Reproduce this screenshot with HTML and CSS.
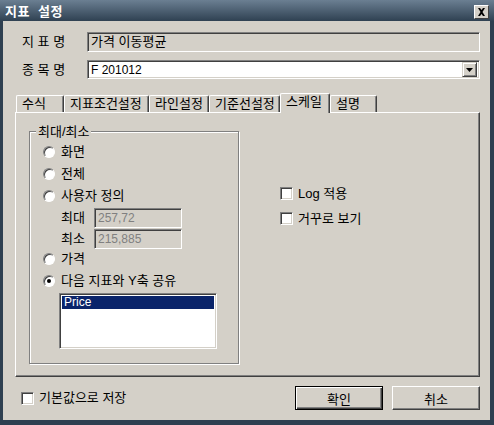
FILE: index.html
```html
<!DOCTYPE html>
<html lang="ko">
<head>
    <meta charset="UTF-8">
    <title>지표 설정</title>
    <link rel="stylesheet" href="styles.css">
</head>
<body>
    <div class="window">
        <div class="titlebar">
            <span class="title">지표 설정</span>
            <span class="close-btn">
                <svg width="9" height="8" viewBox="0 0 9 8"><path d="M1 0h2l1.5 2 1.5-2h2L5.5 4 8 8H6L4.5 6 3 8H1l2.5-4z" fill="#000"/></svg>
            </span>
        </div>
        <div class="client">
            <div class="field-row">
                <label>지 표 명</label>
                <div class="edit disabled">가격 이동평균</div>
            </div>
            <div class="field-row second">
                <label>종 목 명</label>
                <div class="edit combo">
                    <span class="latin">F 201012</span>
                    <span class="drop-btn">
                        <svg width="7" height="4" viewBox="0 0 7 4"><path d="M0 0h7L3.5 4z" fill="#000"/></svg>
                    </span>
                </div>
            </div>

            <div class="tabs">
                <div class="tab" style="width:48px">수식</div>
                <div class="tab" style="width:85px">지표조건설정</div>
                <div class="tab" style="width:60px">라인설정</div>
                <div class="tab" style="width:71px">기준선설정</div>
                <div class="tab active" style="width:50px">스케일</div>
                <div class="tab" style="width:47px">설명</div>
            </div>
            <div class="panel">
                <div class="group">
                    <div class="group-title">최대/최소</div>
                    <div class="radio-row"><span class="radio"></span>화면</div>
                    <div class="radio-row"><span class="radio"></span>전체</div>
                    <div class="radio-row"><span class="radio"></span>사용자 정의</div>
                    <div class="range-row"><span class="range-label">최대</span><div class="edit small disabled latin">257,72</div></div>
                    <div class="range-row"><span class="range-label">최소</span><div class="edit small disabled latin">215,885</div></div>
                    <div class="radio-row gap"><span class="radio"></span>가격</div>
                    <div class="radio-row"><span class="radio checked"></span>다음 지표와 Y축 공유</div>
                    <div class="listbox">
                        <div class="list-item selected latin">Price</div>
                    </div>
                </div>
                <div class="options">
                    <div class="check-row"><span class="checkbox"></span>Log 적용</div>
                    <div class="check-row"><span class="checkbox"></span>거꾸로 보기</div>
                </div>
            </div>

            <div class="footer">
                <div class="check-row"><span class="checkbox"></span>기본값으로 저장</div>
                <div class="buttons">
                    <button class="btn default">확인</button>
                    <button class="btn">취소</button>
                </div>
            </div>
        </div>
    </div>
</body>
</html>
```

FILE: styles.css
```css
body {
    margin: 0;
    font-family: "Liberation Sans", "Noto Sans CJK KR", sans-serif;
    font-size: 13px;
    color: #000;
}

.latin {
    font-size: 12px;
}

.window {
    width: 494px;
    height: 425px;
    box-sizing: border-box;
    background: #2e3f50;
    display: flex;
    flex-direction: column;
}

.titlebar {
    height: 21px;
    display: flex;
    align-items: center;
    justify-content: space-between;
    padding: 0 5px 0 5px;
    background: linear-gradient(#6b7f92, #2f4152);
}

.title {
    color: #fff;
    font-weight: bold;
    font-size: 13px;
    letter-spacing: 0.5px;
    word-spacing: 4px;
}

.close-btn {
    width: 15px;
    height: 14px;
    box-sizing: border-box;
    margin-top: 3px;
    background: #d4d0c8;
    border: 1px solid;
    border-color: #fff #404040 #404040 #fff;
    display: flex;
    align-items: center;
    justify-content: center;
}

.client {
    flex: 1;
    margin: 0 4px 5px 3px;
    background: #d4d0c8;
    padding: 11px 10px 0 12px;
}

.field-row {
    display: flex;
    align-items: center;
    padding-left: 7px;
    height: 20px;
}

.field-row.second {
    margin-top: 8px;
    height: 19px;
}

.field-row label {
    width: 65px;
    line-height: 14px;
}

.edit {
    box-sizing: border-box;
    height: 100%;
    flex: 1;
    background: #fff;
    border: 1px solid;
    border-color: #808080 #fff #fff #808080;
    box-shadow: inset 1px 1px 0 #404040, inset -1px -1px 0 #d4d0c8;
    padding: 0 3px;
    display: flex;
    align-items: center;
    line-height: 14px;
}

.edit.disabled {
    background: #d4d0c8;
}

.combo {
    padding-right: 2px;
    justify-content: space-between;
}

.drop-btn {
    width: 15px;
    height: 15px;
    box-sizing: border-box;
    background: #d4d0c8;
    border: 1px solid;
    border-color: #d4d0c8 #404040 #404040 #d4d0c8;
    box-shadow: inset 1px 1px 0 #fff, inset -1px -1px 0 #808080;
    display: flex;
    align-items: center;
    justify-content: center;
}

.tabs {
    margin-top: 14px;
    height: 19px;
    display: flex;
    align-items: flex-end;
    padding-left: 1px;
}

.tab {
    box-sizing: border-box;
    height: 17px;
    padding-left: 5px;
    line-height: 15px;
    border-top: 1px solid #fff;
    border-left: 1px solid #fff;
    border-right: 1px solid #404040;
    box-shadow: inset -1px 0 0 #808080;
    border-radius: 2px 2px 0 0;
    white-space: nowrap;
}

.tab.active {
    height: 20px;
    margin-bottom: -1px;
    position: relative;
    z-index: 1;
    background: #d4d0c8;
    line-height: 16px;
}

.panel {
    height: 265px;
    box-sizing: border-box;
    border: 1px solid;
    border-color: #fff #404040 #404040 #fff;
    box-shadow: inset -1px -1px 0 #808080;
    display: flex;
    align-items: flex-start;
}

.group {
    width: 210px;
    height: 233px;
    box-sizing: border-box;
    margin: 18px 0 0 13px;
    border: 1px solid #808080;
    box-shadow: inset 1px 1px 0 #fff, 1px 1px 0 #fff;
    padding-left: 13px;
}

.group-title {
    width: fit-content;
    margin: -8px 0 0 -7px;
    padding: 0 2px;
    background: #d4d0c8;
    line-height: 15px;
}

.radio-row {
    height: 22px;
    display: flex;
    align-items: center;
    line-height: 14px;
}

.group-title + .radio-row {
    margin-top: 2px;
}

.radio {
    width: 12px;
    height: 12px;
    box-sizing: border-box;
    border-radius: 50%;
    border: 1px solid;
    border-color: #808080 #fff #fff #808080;
    box-shadow: inset 1px 1px 0 #404040;
    background: #fff;
    margin-right: 6px;
    display: flex;
    align-items: center;
    justify-content: center;
}

.radio.checked::after {
    content: "";
    width: 4px;
    height: 4px;
    border-radius: 50%;
    background: #000;
}

.range-row {
    display: flex;
    align-items: center;
    height: 20px;
    margin-top: 1px;
    padding-left: 18px;
}

.range-label {
    width: 33px;
    line-height: 14px;
}

.edit.small {
    flex: none;
    width: 88px;
    color: #808080;
}

.radio-row.gap {
    margin-top: -1px;
}

.listbox {
    width: 158px;
    height: 56px;
    box-sizing: border-box;
    margin: 1px 0 0 16px;
    background: #fff;
    border: 1px solid;
    border-color: #808080 #fff #fff #808080;
    box-shadow: inset 1px 1px 0 #404040, inset -1px -1px 0 #d4d0c8;
    padding: 2px 2px 0 2px;
}

.list-item {
    height: 13px;
    line-height: 13px;
    padding-left: 2px;
}

.list-item.selected {
    background: #0a246a;
    color: #fff;
}

.options {
    margin-left: 41px;
    padding-top: 74px;
}

.check-row {
    display: flex;
    align-items: center;
    height: 13px;
    line-height: 14px;
}

.options .check-row + .check-row {
    margin-top: 12px;
}

.checkbox {
    width: 13px;
    height: 13px;
    box-sizing: border-box;
    border: 1px solid;
    border-color: #808080 #fff #fff #808080;
    box-shadow: inset 1px 1px 0 #404040, inset -1px -1px 0 #d4d0c8;
    background: #fff;
    margin-right: 5px;
}

.footer {
    margin-top: 9px;
    height: 24px;
    display: flex;
    align-items: center;
    justify-content: space-between;
    padding-left: 6px;
}

.buttons {
    display: flex;
    gap: 9px;
}

.btn {
    width: 88px;
    height: 24px;
    box-sizing: border-box;
    font: inherit;
    background: #d4d0c8;
    border: 1px solid;
    border-color: #fff #404040 #404040 #fff;
    box-shadow: inset -1px -1px 0 #808080;
    padding: 0;
}

.btn.default {
    border-color: #000;
    box-shadow: inset 1px 1px 0 #fff, inset -1px -1px 0 #404040, inset -2px -2px 0 #808080;
}
```
